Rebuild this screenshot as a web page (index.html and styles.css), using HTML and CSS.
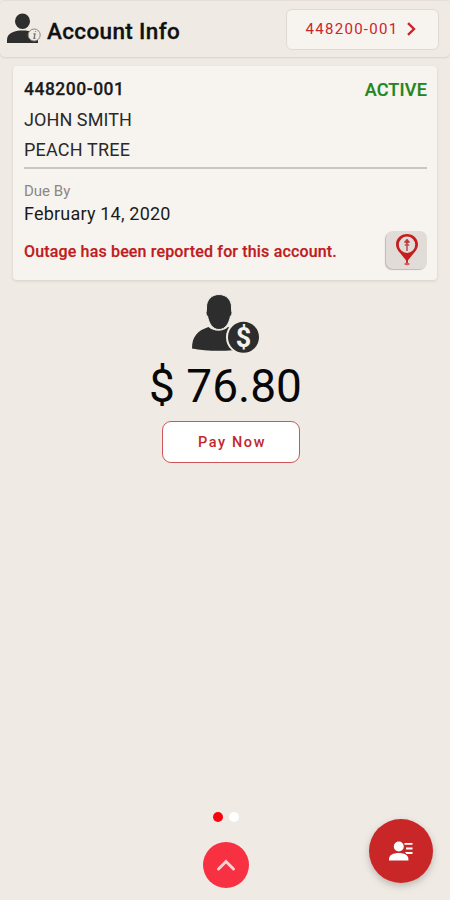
FILE: index.html
```html
<!DOCTYPE html>
<html lang="en">
<head>
<meta charset="utf-8">
<title>Account Info</title>
<link rel="stylesheet" href="styles.css">
</head>
<body>
<div class="screen">
  <header class="header">
    <svg class="header-icon" viewBox="0 0 34 32" width="34" height="32">
      <ellipse cx="15.5" cy="8.3" rx="7.5" ry="7.8" fill="#2e2e2e"/>
      <path d="M0 30v-3C0 20 7 17.500 15.500 17.500S31 20 31 27v3z" fill="#2e2e2e"/>
      <circle cx="27.200" cy="22" r="6" fill="#efeae4" stroke="#8b8783" stroke-width="1"/>
      <path d="M28.500 18.200v.8M26.500 21h1.500l-1 4.300h1.500" fill="none" stroke="#77736f" stroke-width="1.300"/>
    </svg>
    <h1 class="title">Account Info</h1>
    <button class="account-button">
      <span>448200-001</span>
      <svg viewBox="0 0 11 14" width="11" height="14"><path d="M2 1.200 8 7 2 12.800" fill="none" stroke="#c9252b" stroke-width="2.400"/></svg>
    </button>
  </header>
  <main class="content">
    <section class="card">
      <div class="row">
        <strong class="number">448200-001</strong>
        <strong class="status">ACTIVE</strong>
      </div>
      <div class="line name">JOHN SMITH</div>
      <div class="line place">PEACH TREE</div>
      <hr class="divider">
      <div class="due-label">Due By</div>
      <div class="due-date">February 14, 2020</div>
      <div class="outage">
        <span class="outage-text">Outage has been reported for this account.</span>
        <button class="pin-button" aria-label="Outage location">
          <svg viewBox="0 0 24 34" width="24" height="34">
            <path fill="#c41e20" fill-rule="evenodd" d="M12 1C5.800 1 1 5.600 1 11.500c0 3.500 2 6.300 4.500 9L12 28.500l6.500-8c2.500-2.700 4.500-5.500 4.500-9C23 5.600 18.200 1 12 1zm0 2.600a8.200 8.200 0 1 1 0 16.400 8.200 8.200 0 0 1 0-16.400z"/>
            <path d="M12 6v12M9.200 9h5.600M9.800 12h4.400" stroke="#b9494b" stroke-width="1.500"/>
            <circle cx="12" cy="8.500" r="2" fill="#c43a3c"/>
            <path d="M12 27v5" stroke="#c41e20" stroke-width="1.800"/>
            <ellipse cx="12" cy="31" rx="2.700" ry="1.300" fill="#d45c5d"/>
          </svg>
        </button>
      </div>
    </section>
    <section class="payment">
      <svg class="payment-icon" viewBox="0 0 70 60" width="70" height="60">
        <path d="M1 54.500C1 42 7 36.500 17.500 33 23 38 32 38 37 33c10 3 17 9 17 22-16 2.500-39 2.500-53-.5z" fill="#2d2d2d"/>
        <path d="M28 .5C35.500.5 40.500 6 40.500 13c0 1.800-.1 3 .2 4.500.8 1.500 0 4-1.200 4.500C38 29.500 34.500 35.500 28 35.500S18 29.500 16.500 22c-1.200-.5-2-3-1.200-4.500.3-1.500.2-2.700.2-4.500C15.500 6 20.500.5 28 .5z" fill="#2d2d2d" stroke="#efeae4" stroke-width="1"/>
        <circle cx="52.500" cy="43.200" r="16.500" fill="#2d2d2d" stroke="#efeae4" stroke-width="2"/>
        <text class="coin" x="52.500" y="52.500" text-anchor="middle">$</text>
      </svg>
      <div class="amount">$ 76.80</div>
      <button class="pay-button">Pay Now</button>
    </section>
  </main>
  <footer class="footer">
    <div class="dots"><i class="dot current"></i><i class="dot"></i></div>
    <button class="up-button" aria-label="Expand">
      <svg viewBox="0 0 20 14" width="20" height="14"><path d="M2.500 11 10 3.500l7.500 7.500" fill="none" stroke="#fbd3d5" stroke-width="3" stroke-linecap="round"/></svg>
    </button>
  </footer>
  <button class="fab" aria-label="Accounts">
    <svg viewBox="0 0 26 22" width="26" height="22" fill="#fff">
      <circle cx="10.800" cy="6.500" r="5"/>
      <path d="M1 20.500v-1.500c0-4 4.500-6 9.700-6s9.700 2 9.700 6v1.500z"/>
      <path d="M16.500 3h8v1.800h-8zM18 7.500h6.500v2H18zM17 12h7.500v2H18.500z"/>
    </svg>
  </button>
</div>
</body>
</html>
```

FILE: styles.css
```css
* { box-sizing: border-box; }
body { margin: 0; background: #efeae4; font-family: Roboto, sans-serif; color: #1b1b1b; }
button { font-family: inherit; padding: 0; cursor: pointer; }
svg { display: block; flex: none; }
.screen { position: relative; height: 900px; display: flex; flex-direction: column; overflow: hidden; background: #efeae4; }
.header { height: 57px; flex: none; display: flex; align-items: center; padding: 0 11px 0 7px; border-top: 1px solid #e3deda; border-radius: 5px; box-shadow: 0 1px 2px #d8d2cd; }
.header-icon { margin-top: 0; }
.title { margin: 3px 0 0 6px; font-size: 22.500px; line-height: 28px; font-weight: 500; letter-spacing: .35px; color: #111; -webkit-text-stroke: .3px #111; white-space: nowrap; }
.account-button { width: 153px; height: 41px; margin-left: auto; display: flex; align-items: center; justify-content: center; gap: 7px; border: 1px solid #dfdad6; border-radius: 6px; background: #f7f4f0; color: #c9252b; font-size: 15px; letter-spacing: 1.3px; padding-right: 3px; }
.content { flex: 1; }
.card { height: 214px; margin: 9px 13px 0; padding: 8px 10px 0 11px; background: #f7f4f0; border-radius: 4px; box-shadow: 0 1px 3px #d4cfca; }
.row { height: 30px; display: flex; align-items: center; justify-content: space-between; font-size: 18px; }
.number, .status { font-weight: 500; }
.number { font-size: 17.500px; letter-spacing: .5px; -webkit-text-stroke: .25px #1b1b1b; }
.status { letter-spacing: .2px; color: #23861a; -webkit-text-stroke: .2px #23861a; }
.line { height: 30px; line-height: 31px; font-size: 18px; color: #292929; }
.name { letter-spacing: .08px; }
.place { line-height: 32px; letter-spacing: .2px; }
.divider { height: 2px; margin: 3px 0 0; border: 0; background: #cac6c2; }
.due-label { height: 23px; margin-top: 11px; line-height: 23px; font-size: 15px; color: #8b8784; }
.due-date { height: 22px; line-height: 22px; font-size: 18px; letter-spacing: .2px; }
.outage { height: 39px; margin-top: 5px; display: flex; align-items: center; justify-content: space-between; }
.outage-text { padding-top: 3px; font-size: 16px; font-weight: 500; letter-spacing: .16px; color: #c01c20; -webkit-text-stroke: .2px #c01c20; white-space: nowrap; }
.pin-button { width: 41px; height: 38px; display: flex; align-items: center; justify-content: center; border: 0; border-radius: 7px; background: #e1dcd8; box-shadow: -1px 1px 1px #bdb8b3; }
.payment { display: flex; flex-direction: column; align-items: center; padding-top: 14px; }
.payment-icon { margin-left: 2px; }
.amount { height: 67px; margin-left: 1px; line-height: 65px; font-size: 46px; color: #080808; white-space: nowrap; }
.coin { font: 700 27px Roboto, sans-serif; fill: #f5f2ee; }
.pay-button { width: 138px; height: 42px; margin: 0 0 0 12px; padding: 1px 0 0 2px; border: 1px solid #ce5559; border-radius: 9px; background: #fff; color: #c5262c; font-size: 14.500px; font-weight: 500; letter-spacing: 1.6px; }
.footer { height: 89px; flex: none; display: flex; flex-direction: column; align-items: center; padding-left: 1px; }
.dots { display: flex; gap: 6px; margin: 1px 0 20px; }
.dot { width: 10px; height: 10px; border-radius: 50%; background: #fff; }
.current { background: #f5050d; }
.up-button { width: 46px; height: 46px; display: flex; align-items: center; justify-content: center; border: 0; border-radius: 50%; background: #f73042; }
.fab { position: absolute; left: 369px; top: 819px; width: 64px; height: 64px; display: flex; align-items: center; justify-content: center; border: 0; border-radius: 50%; background: #c92628; box-shadow: 0 3px 7px #9c969199; }
```
